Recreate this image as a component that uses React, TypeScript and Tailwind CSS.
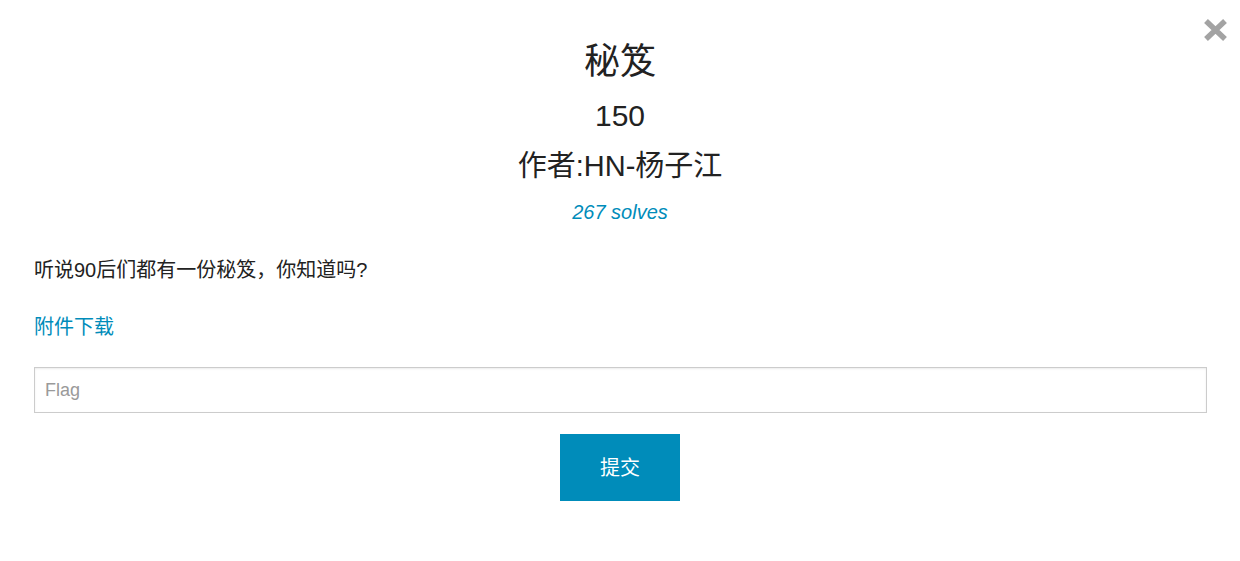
export default function App() {
  return (
    <div
      className="relative min-h-[561px] w-full bg-white px-[34px] pb-10 text-[#222]"
      style={{ fontFamily: '"Liberation Sans", "Noto Sans CJK SC", sans-serif' }}
    >
      {/* Close button */}
      <button className="absolute right-[12px] top-[18px] h-[24px] w-[25px]" aria-label="close">
        <svg viewBox="0 0 25 24" width="25" height="24">
          <path d="M3 3 L22 21 M22 3 L3 21" stroke="#a3a3a3" strokeWidth="5.5" strokeLinecap="butt" />
        </svg>
      </button>

      {/* Header */}
      <div className="pt-[37px] text-center">
        <h1 className="text-[36px] leading-[50px]">秘笈</h1>
        <p className="mt-[9px] text-[30px] leading-[40px]">150</p>
        <p className="mt-[10px] text-[29px] leading-[40px]">作者:HN-杨子江</p>
        <p className="mt-[13px] text-[20px] italic leading-[26px] text-[#008cba]">267 solves</p>
      </div>

      {/* Description */}
      <p className="mt-[32px] text-[20px] leading-[26px]">听说90后们都有一份秘笈，你知道吗?</p>
      <a href="#" className="mt-[31px] block text-[20px] leading-[26px] text-[#008cba]">
        附件下载
      </a>

      {/* Flag form */}
      <input
        type="text"
        placeholder="Flag"
        className="mt-[27px] block h-[46px] w-[calc(100%+1px)] border border-[#cccccc] px-[10px] text-[18px] placeholder:text-[#9a9a9a] shadow-[inset_0_1px_2px_rgba(0,0,0,0.08)] outline-none"
      />
      <div className="mt-[21px] flex justify-center">
        <button className="h-[67px] w-[120px] bg-[#008cba] text-[20px] text-white">提交</button>
      </div>
    </div>
  )
}
